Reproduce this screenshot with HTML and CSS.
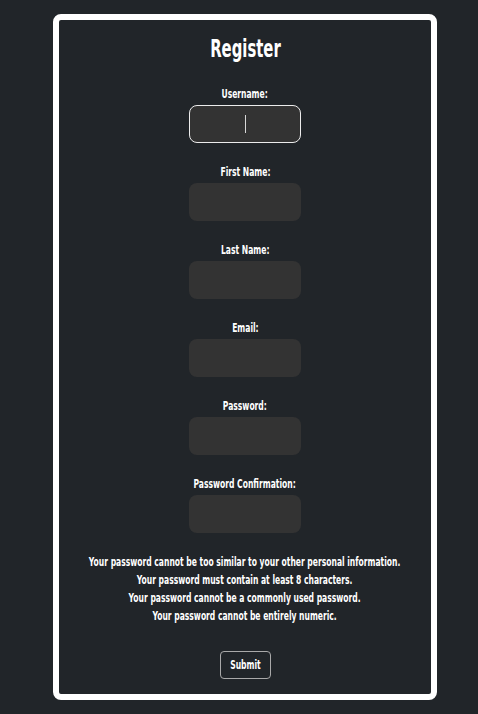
FILE: index.html
```html
<!DOCTYPE html>
<html>
<head>
<meta charset="utf-8">
<link rel="stylesheet" href="styles.css">
</head>
<body>
<div class="card">
  <h1 class="title">Register</h1>
  <form class="form">
    <div class="field">
      <label class="label">Username:</label>
      <div class="input focused"><span class="caret"></span></div>
    </div>
    <div class="field">
      <label class="label">First Name:</label>
      <div class="input"></div>
    </div>
    <div class="field">
      <label class="label">Last Name:</label>
      <div class="input"></div>
    </div>
    <div class="field">
      <label class="label">Email:</label>
      <div class="input"></div>
    </div>
    <div class="field">
      <label class="label">Password:</label>
      <div class="input"></div>
    </div>
    <div class="field">
      <label class="label">Password Confirmation:</label>
      <div class="input"></div>
    </div>
    <ul class="help">
      <li>Your password cannot be too similar to your other personal information.</li>
      <li>Your password must contain at least 8 characters.</li>
      <li>Your password cannot be a commonly used password.</li>
      <li>Your password cannot be entirely numeric.</li>
    </ul>
    <button type="button" class="submit"><span class="submit-text">Submit</span></button>
  </form>
</div>
</body>
</html>
```

FILE: styles.css
```css
html, body {
  margin: 0;
  padding: 0;
  background: #212529;
}
body {
  font-family: "DejaVu Sans Condensed", "DejaVu Sans", sans-serif;
  color: #fff;
}
.card {
  box-sizing: border-box;
  margin: 14px 0 0 53px;
  width: 384px;
  height: 686px;
  border: 6px solid #fff;
  border-radius: 8px;
  background: #212529;
  display: flex;
  flex-direction: column;
  align-items: center;
}
.title {
  margin: 14px 0 21px;
  font-size: 25px;
  line-height: 30px;
  font-weight: bold;
  transform: scaleX(0.66);
}
.form {
  display: flex;
  flex-direction: column;
  align-items: center;
  width: 100%;
}
.field {
  display: flex;
  flex-direction: column;
  align-items: center;
  margin-bottom: 20px;
}
.label {
  font-size: 13px;
  font-weight: bold;
  line-height: 17px;
  margin-bottom: 3px;
  white-space: nowrap;
  transform: scaleX(0.65);
}
.input {
  box-sizing: border-box;
  width: 112px;
  height: 38px;
  background: #333333;
  border-radius: 8px;
  display: flex;
  align-items: center;
  justify-content: center;
}
.input.focused {
  border: 1px solid #ececec;
}
.caret {
  width: 1px;
  height: 18px;
  background: #d8d8d8;
}
.help {
  list-style: none;
  margin: 0;
  padding: 0;
  text-align: center;
  font-size: 13px;
  font-weight: bold;
  line-height: 18px;
  white-space: nowrap;
  transform: scaleX(0.65);
}
.submit {
  margin-top: 26px;
  background: transparent;
  color: #fff;
  font-family: inherit;
  font-weight: bold;
  font-size: 13px;
  line-height: 16px;
  border: 1px solid #a9a9a9;
  border-radius: 4px;
  width: 51px;
  height: 28px;
  padding: 0;
  display: flex;
  align-items: center;
  justify-content: center;
}
.submit-text {
  display: inline-block;
  white-space: nowrap;
  transform: scaleX(0.65);
}
```
